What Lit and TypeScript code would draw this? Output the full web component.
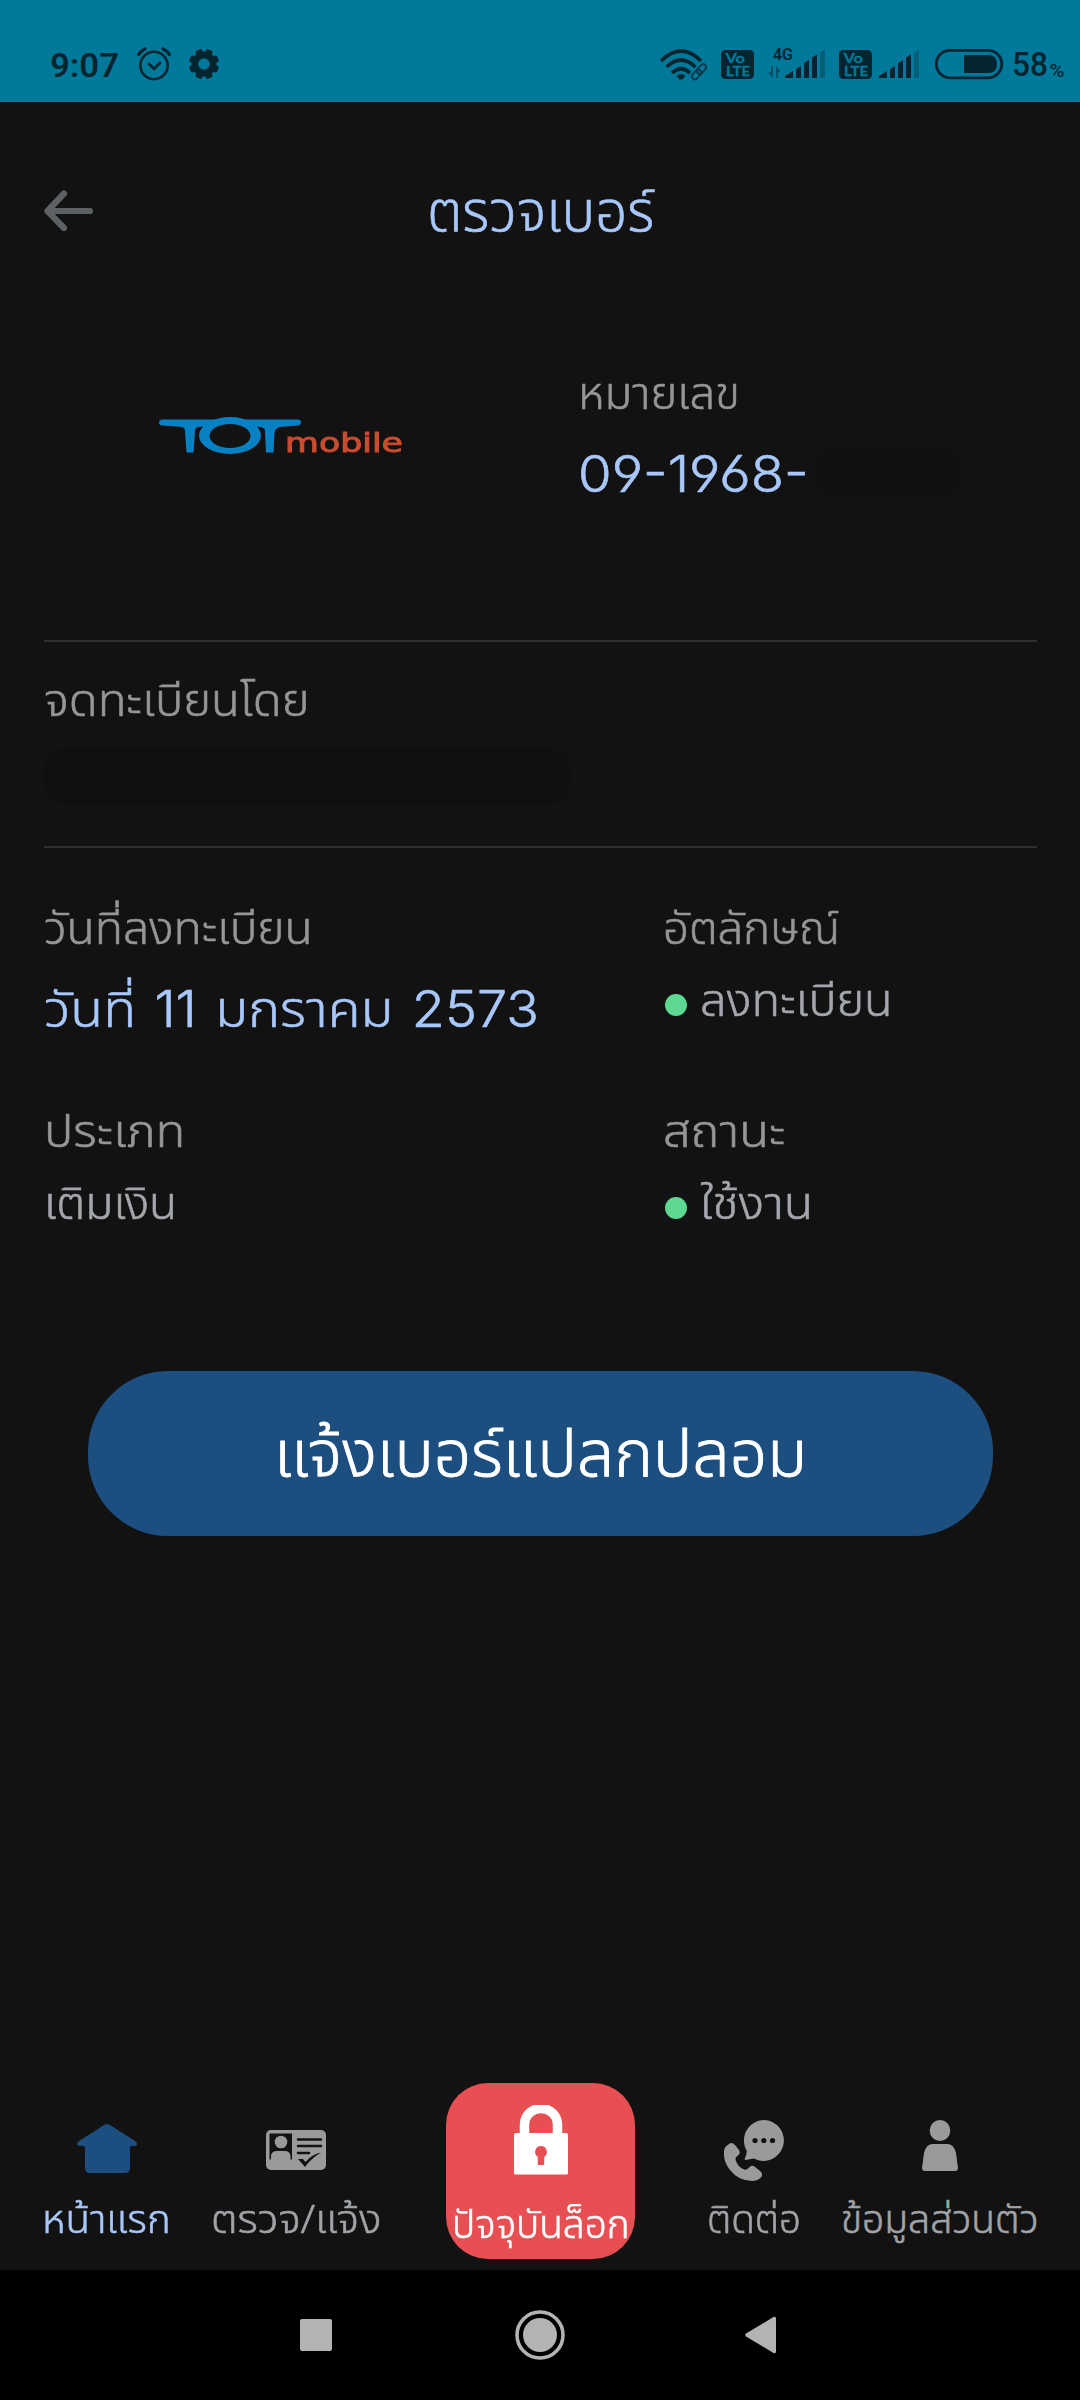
import { LitElement, html, svg, css } from "lit";
import { customElement, property, state } from "lit/decorators.js";
import { styleMap } from "lit/directives/style-map.js";

/** Single line of text stretched horizontally to a given width. */
@customElement("fit-text")
export class FitText extends LitElement {
  @property() text = "";
  @property({ type: Number }) width = 100;
  @state() private scale = 1;

  static styles = css`
    :host { display: block; flex: none; }
    .box { display: block; white-space: nowrap; text-align: left; }
    .run { display: inline-block; transform-origin: 0 50%; white-space: pre; }
  `;

  firstUpdated() {
    const run = this.renderRoot.querySelector(".run") as HTMLElement;
    const natural = run.offsetWidth;
    if (natural > 0) this.scale = this.width / natural;
  }

  render() {
    return html`<span class="box" style=${styleMap({ width: `${this.width}px` })}
      ><span class="run" style=${styleMap({ transform: `scaleX(${this.scale})` })}>${this.text}</span></span
    >`;
  }
}

@customElement("status-bar")
export class StatusBar extends LitElement {
  static styles = css`
    :host { display: block; height: 102px; background: #00799b; color: #04252f; font-family: Roboto, "Liberation Sans", sans-serif; -webkit-text-stroke: 0; }
    svg { display: block; }
    text { fill: currentColor; }
    .cut { fill: #00799b; stroke: #00799b; stroke-width: 0.3px; font-family: Lato, sans-serif; font-weight: 700; }
  `;

  private volte(x: number) {
    return svg`<g transform="translate(${x} 50)">
      <rect width="33" height="29" rx="4.500"/>
      <text class="cut" x="4.500" y="13" font-size="14" textLength="19.500" lengthAdjust="spacingAndGlyphs">Vo</text>
      <text class="cut" x="5" y="25.500" font-size="14" textLength="24" lengthAdjust="spacingAndGlyphs">LTE</text>
    </g>`;
  }

  private signal(x: number) {
    return svg`<g transform="translate(${x} 49)">
      <path d="M0 29v-2l8-5v7zM11 29V20l5-3v12zM19 29V14l5-3v18zM27 29V8.500l5-3V29z"/>
      <path d="M35 29V3.500l5-3V29z" opacity=".3"/>
    </g>`;
  }

  render() {
    const teeth = Array.from({ length: 8 }, (_, i) => i * 45 + 22.5);
    return html`<svg width="1080" height="102" viewBox="0 0 1080 102" fill="#04252f">
      <text x="50" y="77" font-size="34" font-weight="600" textLength="69" lengthAdjust="spacingAndGlyphs">9:07</text>
      <g fill="none" stroke="#04252f" stroke-width="2.600" stroke-linecap="round" stroke-linejoin="round">
        <circle cx="154" cy="65.500" r="13.700"/>
        <path d="M149 64l5 4.800 6-5.800" stroke-width="2.800"/>
        <path d="M138.500 54.500q2.500-3.800 6.500-5.500M169.500 54.500q-2.500-3.800-6.500-5.500" stroke-width="3.200"/>
      </g>
      <circle cx="204" cy="64" r="9" fill="none" stroke="#04252f" stroke-width="6.600"/>
      ${teeth.map(
        (a) => svg`<path d="M199.600 55L200.600 50q.2-1.100 1.300-1.100h4.200q1.100 0 1.300 1.100L208.400 55z" transform="rotate(${a} 204 64)"/>`,
      )}
      <g fill="none" stroke="#04252f" stroke-width="3.600">
        <path d="M661 61q20-20 40 0"/><path d="M666.500 67q14.500-14 29 0"/><path d="M672 73q9-8.500 18 0"/>
      </g>
      <path d="M676.500 76q4.500-4 9 0l-3 3.500h-3z"/>
      <g fill="none" stroke="#04252f" stroke-width="1.800" opacity=".75">
        <rect x="696" y="66" width="11" height="6" rx="3" transform="rotate(-48 701.500 69)"/>
        <rect x="691" y="71.500" width="11" height="6" rx="3" transform="rotate(-48 696.500 74.500)"/>
      </g>
      ${this.volte(721)}
      <text x="773" y="59.500" font-size="16.500" font-weight="600" textLength="20" lengthAdjust="spacingAndGlyphs">4G</text>
      <path d="M771 66h2v12l-5-6h3zM776 78h2V72h3l-5-6z" opacity=".5"/>
      ${this.signal(785)} ${this.volte(839)} ${this.signal(879)}
      <rect x="936.300" y="50.300" width="65.500" height="27.500" rx="13.700" fill="none" stroke="#04252f" stroke-width="2.800"/>
      <path d="M964 55h24q9 0 9 9t-9 9h-24z"/>
      <text x="1012" y="76" font-size="34" font-weight="500" textLength="36" lengthAdjust="spacingAndGlyphs">58</text>
      <text x="1049.500" y="77" font-size="19" font-weight="500" textLength="15" lengthAdjust="spacingAndGlyphs">%</text>
    </svg>`;
  }
}

@customElement("tot-logo")
export class TotLogo extends LitElement {
  static styles = css`
    :host { display: block; -webkit-text-stroke: 0; }
    svg { display: block; overflow: visible; filter: blur(0.6px); }
    .mobile { font: 400 27px "DejaVu Sans", sans-serif; fill: #cc4b2e; stroke: #cc4b2e; stroke-width: 1px; }
  `;
  render() {
    return html`<svg width="243" height="38" viewBox="0 0 243 38">
      <g fill="#0880c4">
        <path d="M3 2.500H139Q142 2.500 142 5T139 8.500L121 10Q116 11 115.500 16L114.500 35.500H107L106 14Q106 10 100 10L40 10Q36 10 36 14L34.500 35.500H27.500L26 14Q26 10 21 9.700L3 8.500Q0 8 0 5.500T3 2.500Z"/>
        <ellipse cx="71" cy="18.500" rx="31" ry="18.500"/>
      </g>
      <ellipse cx="71" cy="19" rx="20.500" ry="12" fill="#121212"/>
      <path d="M43 10q-5 3-4.500 10M99 10q5 3 4.500 10" fill="none" stroke="#121212" stroke-width="1.600"/>
      <text class="mobile" x="126" y="35" textLength="118" lengthAdjust="spacingAndGlyphs">mobile</text>
    </svg>`;
  }
}

const icons = {
  home: html`<svg width="60" height="62" viewBox="0 0 60 62" fill="#1c4e80">
    <path d="M27 5q3-2 6 0L58 21q2 1 2 3 0 2-3 2-4-.8-4 2V48q0 5-5 5H13q-5 0-5-5V28q0-3-4-2.200Q0 26 0 24q0-2 2-3z"/>
  </svg>`,
  card: html`<svg width="60" height="62" viewBox="0 0 60 62">
    <rect y="10" width="60" height="40" rx="5" fill="#9a9a9a"/>
    <path d="M3.500 13.500h22.500v26h-1.500v-3q0-5.500-6-5.500h-7.500q-6 0-6 5.500v3h-1.500z" fill="#121212"/>
    <circle cx="15" cy="22" r="6.300" fill="#9a9a9a"/>
    <g stroke="#121212" stroke-width="2.500" stroke-linecap="round"><path d="M32 19.500h23M32 26h23M32 33h11"/></g>
    <path d="M32 39h5l2.500 3Q46 34 55 32.500 45 38.500 39 47z" fill="#121212"/>
  </svg>`,
  contact: html`<svg width="60" height="62" viewBox="0 0 60 62">
    <path d="M40 0a20.200 20.500 0 1 1-10 38.500q-5 .5-8 1.500-2 0-1-2 1.500-3 1.800-7A20.500 20.500 0 0 1 40 0z" fill="#9a9a9a"/>
    <g fill="#121212"><circle cx="31" cy="20.500" r="2.600"/><circle cx="39.800" cy="20.500" r="2.600"/><circle cx="48.500" cy="20.500" r="2.600"/></g>
    <path d="M5 24q3-2.500 6 1l4 5q2 3-1 5.500-3.500 2-2 5.500Q14 47 20 49.500q3 1 5.500-2.500 2.500-2 5-.5l5.500 4.500q4 3 .5 7Q33 61 28 61 14 60.500 6 50-1 41 0 31q.5-4.500 5-7z" fill="#9a9a9a"/>
  </svg>`,
  person: html`<svg width="36" height="62" viewBox="0 0 36 62" fill="#9a9a9a">
    <ellipse cx="18" cy="10.500" rx="10.300" ry="10.500"/>
    <path d="M11 24h14q7 0 9 9l2 15q0 3-3 3H3q-3 0-3-3l2-15q2-9 9-9z"/>
  </svg>`,
  lock: html`<svg width="54" height="70" viewBox="0 0 54 70">
    <path d="M10.500 31V19.500a16.500 16 0 0 1 33 0V31" fill="none" stroke="#fff" stroke-width="9.500"/>
    <rect y="28" width="54" height="41.500" rx="1.500" fill="#fff"/>
    <path d="M27 41a6 6 0 0 1 3.200 11v7q0 1-1 1h-4.400q-1 0-1-1v-7A6 6 0 0 1 27 41z" fill="#e84f52"/>
  </svg>`,
};

@customElement("app-root")
export class AppRoot extends LitElement {
  static styles = css`
    :host {
      display: block; width: 1080px; height: 2400px; overflow: hidden;
      background: #121212; color: #9a9a9a;
      font-family: "Noto Sans", "Noto Sans Thai", sans-serif; font-weight: 300;
      -webkit-text-stroke: 0.6px currentColor;
    }
    .screen { display: flex; flex-direction: column; height: 2400px; }
    .header { display: grid; grid-template-columns: 50px 1fr 50px; align-items: center; height: 216px; padding: 0 44px; box-sizing: border-box; }
    .title { justify-self: center; font-size: 55px; line-height: 60px; color: #a8c7fa; padding-left: 1px; }
    .summary { display: grid; grid-template-columns: 534px 1fr; height: 324px; box-sizing: border-box; margin: 0 43px 0 44px; border-bottom: 2px solid #303030; }
    .brand { padding: 99px 0 0 115px; }
    .number { padding-top: 44px; display: flex; flex-direction: column; gap: 20px; }
    .label { font-size: 44px; line-height: 60px; color: #969696; }
    .value { font-size: 44px; line-height: 60px; color: #a3a7ac; }
    .accent { font-family: Inter, "Noto Sans Thai", "Noto Sans", sans-serif; font-feature-settings: "cv03", "cv04"; font-weight: 300; font-size: 50px; line-height: 64px; color: #a8c7fa; word-spacing: 3px; }
    .masked { display: flex; align-items: center; gap: 4px; }
    .owner { height: 206px; box-sizing: border-box; margin: 0 43px 0 44px; padding-top: 27px; border-bottom: 2px solid #303030; }
    .mask { width: 527px; height: 56px; margin-top: 19px; border-radius: 24px; background: #101010; }
    .mask.short { width: 150px; height: 56px; margin: 0; background: #111111; }
    .details { display: grid; grid-template-columns: 619px 1fr; grid-auto-rows: 203px; padding: 49px 43px 0 44px; height: 523px; box-sizing: border-box; }
    .cell { display: flex; flex-direction: column; gap: 12px; }
    .cell.wide { gap: 20px; }
    .state { display: flex; align-items: center; gap: 13px; padding-left: 2px; }
    .dot { width: 22px; height: 22px; border-radius: 50%; background: #5cd893; margin-top: 11px; }
    .report { display: flex; align-items: center; justify-content: center; width: 905px; height: 165px; margin-left: 88px; border: 0; padding: 0 0 3px; box-sizing: border-box; border-radius: 80px; background: #1c4e80; color: #fff; font: inherit; font-size: 64px; line-height: 70px; -webkit-text-stroke: 0.9px #fff; }
    .tabs { margin-top: auto; height: 187px; display: flex; align-items: flex-start; padding-left: 42px; font-size: 39px; line-height: 44px; color: #a0a3a7; }
    .tab { display: flex; flex-direction: column; align-items: center; gap: 14px; padding-top: 37px; }
    .tab.home { color: #a8c7fa; }
    .tab.card { margin-left: 40px; }
    .tab.contact { margin-left: 72px; }
    .tab.person { margin-left: 40px; }
    .lock { margin-left: 65px; width: 189px; height: 176px; box-sizing: border-box; border-radius: 42px; background: #e84f52; color: #fff; display: flex; flex-direction: column; align-items: center; gap: 26px; padding-top: 22px; }
    .system { height: 130px; background: #000; display: flex; align-items: center; padding-left: 300px; box-sizing: border-box; }
    .sys-home { margin-left: 183px; }
    .sys-back { margin-left: 180px; }
    svg { display: block; }
  `;

  private text(cls: string, text: string, width: number) {
    return html`<fit-text class=${cls} .text=${text} .width=${width}></fit-text>`;
  }

  render() {
    return html`<div class="screen">
      <status-bar></status-bar>
      <header class="header">
        <svg width="50" height="42" viewBox="0 0 50 42" fill="none" stroke="#5c6163" stroke-width="6.200" stroke-linecap="round" stroke-linejoin="round">
          <path d="M20 4.500L3.500 22 20 39M3.500 22H46"/>
        </svg>
        ${this.text("title", "ตรวจเบอร์", 227)}
      </header>
      <section class="summary">
        <div class="brand"><tot-logo></tot-logo></div>
        <div class="number">
          ${this.text("label", "หมายเลข", 162)}
          <div class="masked">${this.text("accent", "09-1968-", 231)}<div class="mask short"></div></div>
        </div>
      </section>
      <section class="owner">
        ${this.text("label", "จดทะเบียนโดย", 265)}
        <div class="mask"></div>
      </section>
      <section class="details">
        <div class="cell wide">
          ${this.text("label", "วันที่ลงทะเบียน", 269)}
          ${this.text("accent", "วันที่ 11 มกราคม 2573", 495)}
        </div>
        <div class="cell">
          ${this.text("label", "อัตลักษณ์", 177)}
          <div class="state"><span class="dot"></span>${this.text("value", "ลงทะเบียน", 193)}</div>
        </div>
        <div class="cell">
          ${this.text("label", "ประเภท", 141)}
          ${this.text("value", "เติมเงิน", 133)}
        </div>
        <div class="cell">
          ${this.text("label", "สถานะ", 122)}
          <div class="state"><span class="dot"></span>${this.text("value", "ใช้งาน", 113)}</div>
        </div>
      </section>
      <button class="report">${this.text("", "แจ้งเบอร์แปลกปลอม", 533)}</button>
      <nav class="tabs">
        <div class="tab home">${icons.home}${this.text("", "หน้าแรก", 129)}</div>
        <div class="tab card">${icons.card}${this.text("", "ตรวจ/แจ้ง", 170)}</div>
        <div class="lock">${icons.lock}${this.text("", "ปัจจุบันล็อก", 178)}</div>
        <div class="tab contact">${icons.contact}${this.text("", "ติดต่อ", 94)}</div>
        <div class="tab person">${icons.person}${this.text("", "ข้อมูลส่วนตัว", 198)}</div>
      </nav>
      <div class="system">
        <svg width="32" height="32"><rect width="32" height="32" rx="2" fill="#b3b3b3"/></svg>
        <svg class="sys-home" width="50" height="50"><circle cx="25" cy="25" r="23" fill="none" stroke="#b3b3b3" stroke-width="3.600"/><circle cx="25" cy="25" r="17" fill="#b3b3b3"/></svg>
        <svg class="sys-back" width="31" height="38"><path d="M1 17.500L28.500 1q2.500-1 2.500 1.500v33q0 2.500-2.500 1.500L1 20.500q-1.500-1.500 0-3z" fill="#b3b3b3"/></svg>
      </div>
    </div>`;
  }
}
